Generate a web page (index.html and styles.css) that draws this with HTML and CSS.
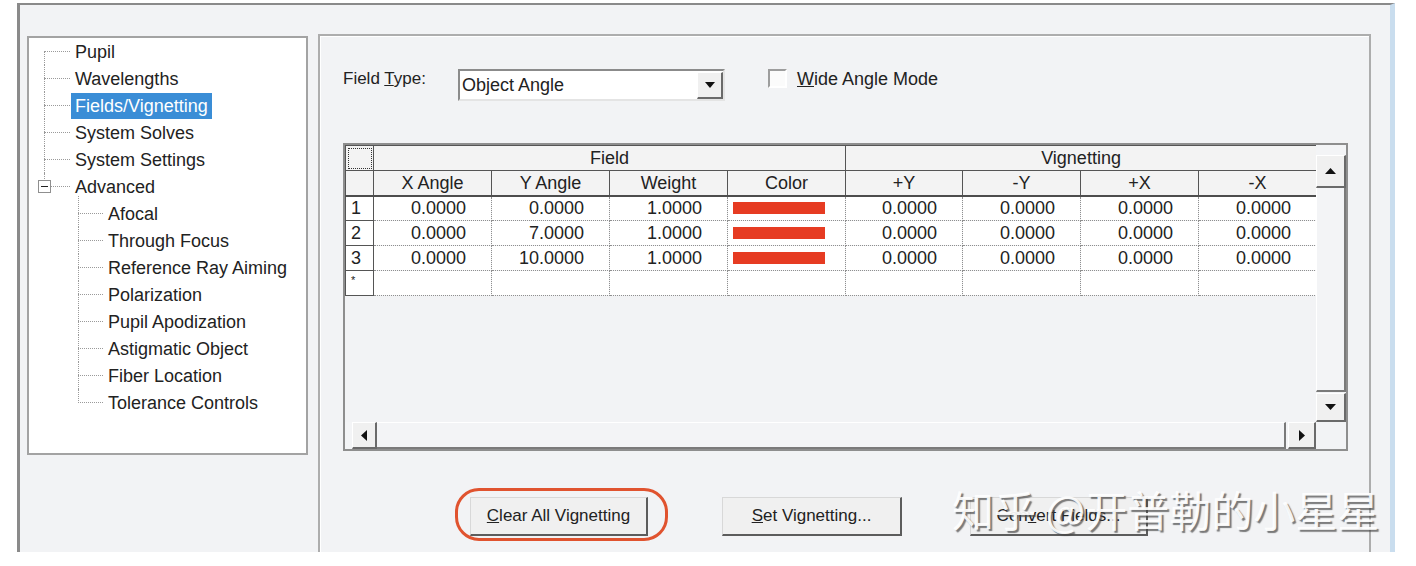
FILE: index.html
```html
<!DOCTYPE html>
<html lang="en">
  <head>
    <meta charset="utf-8">
    <title>System Explorer - Fields/Vignetting</title>
    <link rel="stylesheet" href="styles.css">
  </head>
  <body>

  <div id="dialog">

    <div id="tree">
      <div class="node first"><span class="label">Pupil</span></div>
      <div class="node"><span class="label">Wavelengths</span></div>
      <div class="node"><span class="label selected">Fields/Vignetting</span></div>
      <div class="node"><span class="label">System Solves</span></div>
      <div class="node"><span class="label">System Settings</span></div>
      <div class="node last open"><span class="toggle"></span><span class="label">Advanced</span></div>
      <div class="node child first"><span class="label">Afocal</span></div>
      <div class="node child"><span class="label">Through Focus</span></div>
      <div class="node child"><span class="label">Reference Ray Aiming</span></div>
      <div class="node child"><span class="label">Polarization</span></div>
      <div class="node child"><span class="label">Pupil Apodization</span></div>
      <div class="node child"><span class="label">Astigmatic Object</span></div>
      <div class="node child"><span class="label">Fiber Location</span></div>
      <div class="node child last"><span class="label">Tolerance Controls</span></div>
    </div>

    <div id="panel">

      <div class="fieldtype">
        <span class="caption">Field <u>T</u>ype:</span>
        <div class="combo">
          <span>Object Angle</span>
          <span class="drop btn3d">
            <svg width="10" height="6" viewBox="0 0 10 6"><polygon points="0,0 10,0 5,6" fill="#111"/></svg>
          </span>
        </div>
        <label class="check"><span class="box"></span><span><u>W</u>ide Angle Mode</span></label>
      </div>

      <div class="grid">
        <div class="cells">
          <table class="sheet">
            <colgroup>
              <col class="rowhead">
              <col><col><col><col>
              <col class="narrow"><col><col><col>
            </colgroup>
            <tr class="group">
              <th class="corner"></th>
              <th colspan="4">Field</th>
              <th colspan="4">Vignetting</th>
            </tr>
            <tr class="cols">
              <th class="blank"></th>
              <th>X Angle</th><th>Y Angle</th><th>Weight</th><th>Color</th>
              <th>+Y</th><th>-Y</th><th>+X</th><th>-X</th>
            </tr>
            <tr>
              <th class="num">1</th>
              <td>0.0000</td><td>0.0000</td><td>1.0000</td>
              <td class="swatch"><span></span></td>
              <td>0.0000</td><td>0.0000</td><td>0.0000</td><td>0.0000</td>
            </tr>
            <tr>
              <th class="num">2</th>
              <td>0.0000</td><td>7.0000</td><td>1.0000</td>
              <td class="swatch"><span></span></td>
              <td>0.0000</td><td>0.0000</td><td>0.0000</td><td>0.0000</td>
            </tr>
            <tr>
              <th class="num">3</th>
              <td>0.0000</td><td>10.0000</td><td>1.0000</td>
              <td class="swatch"><span></span></td>
              <td>0.0000</td><td>0.0000</td><td>0.0000</td><td>0.0000</td>
            </tr>
            <tr class="new">
              <th class="num">*</th>
              <td></td><td></td><td></td><td></td>
              <td></td><td></td><td></td><td></td>
            </tr>
          </table>
        </div>

        <div class="vscroll">
          <span class="up btn3d">
            <svg width="11" height="6" viewBox="0 0 11 6"><polygon points="0,6 11,6 5.5,0" fill="#111"/></svg>
          </span>
          <span class="vtrack"></span>
          <span class="down btn3d">
            <svg width="11" height="6" viewBox="0 0 11 6"><polygon points="0,0 11,0 5.5,6" fill="#111"/></svg>
          </span>
        </div>

        <div class="hscroll">
          <span class="left btn3d">
            <svg width="6" height="11" viewBox="0 0 6 11"><polygon points="6,0 6,11 0,5.5" fill="#111"/></svg>
          </span>
          <span class="htrack"></span>
          <span class="right btn3d">
            <svg width="6" height="11" viewBox="0 0 6 11"><polygon points="0,0 0,11 6,5.5" fill="#111"/></svg>
          </span>
        </div>

        <div class="corner-box"></div>
      </div>

      <div class="buttons">
        <div class="marked">
          <button class="push wide"><u>C</u>lear All Vignetting</button>
        </div>
        <button class="push wider set"><u>S</u>et Vignetting...</button>
        <button class="push wide convert">Con<u>v</u>ert Fields...</button>
      </div>

    </div>
  </div>

  <div class="watermark">知乎 @开普勒的小星星</div>

  </body>
</html>
```

FILE: styles.css
```css
html, body {
  margin: 0;
  padding: 0;
}
body {
  position: relative;
  height: 566px;
  overflow: hidden;
  background: #ffffff;
  color: #222222;
  font-family: "Liberation Sans", Arial, sans-serif;
  font-size: 18px;
}

#dialog {
  box-sizing: border-box;
  width: 1378px;
  height: 549px;
  margin: 3px 0 0 17px;
  padding: 29px 0 0 7px;
  background: #f2f3f5;
  border-left: 3px solid #8a8a8a;
  border-top: 2px solid #8a8a8a;
  border-right: 5px solid #c9ddee;
  display: flex;
  align-items: flex-start;
  gap: 10px;
}

/* tree on the left */

#tree {
  box-sizing: border-box;
  width: 281px;
  height: 419px;
  margin-top: 2px;
  background: #ffffff;
  border: 2px solid #a3a3a3;
}

.node {
  position: relative;
  height: 27px;
  padding-left: 42px;
  display: flex;
  align-items: center;
}
.node.child {
  padding-left: 75px;
}

/* dotted connectors */
.node::before {
  content: '';
  position: absolute;
  left: 15px;
  top: 13px;
  width: 26px;
  border-top: 1px dotted #9a9a9a;
}
.node::after {
  content: '';
  position: absolute;
  left: 15px;
  top: 0;
  bottom: 0;
  border-left: 1px dotted #9a9a9a;
}
.node.first::after {
  top: 13px;
}
.node.last::after {
  bottom: 13px;
}
.node.open::before {
  left: 22px;
  width: 19px;
}
.node.child::before {
  left: 49px;
  width: 25px;
}
.node.child::after {
  left: 49px;
}
.node.child.first::after {
  top: -4px;
}

.toggle {
  position: absolute;
  z-index: 1;
  left: 9px;
  top: 7px;
  width: 11px;
  height: 11px;
  border: 1px solid #8f8f8f;
  background: #ffffff;
}
.toggle::after {
  content: '';
  position: absolute;
  left: 2px;
  top: 5px;
  width: 7px;
  height: 1px;
  background: #222;
}

.label {
  padding: 0 4px;
  line-height: 26px;
  white-space: nowrap;
}
.label.selected {
  background: #3a8dd6;
  color: #ffffff;
}

/* right hand panel */

#panel {
  box-sizing: border-box;
  align-self: stretch;
  width: 1053px;
  padding: 33px 0 0 23px;
  border: 2px solid #adadad;
  border-bottom: none;
  box-shadow: inset 1px 1px 0 #ffffff;
}

.fieldtype {
  display: flex;
  align-items: flex-start;
  height: 32px;
}
.caption {
  width: 115px;
  font-size: 17px;
  line-height: 20px;
}

.combo {
  box-sizing: border-box;
  width: 267px;
  height: 32px;
  padding-left: 2px;
  display: flex;
  align-items: center;
  background: #ffffff;
  border: 2px solid;
  border-color: #8b8b8b #e4e4e4 #e4e4e4 #8b8b8b;
}

.btn3d {
  box-sizing: border-box;
  display: flex;
  align-items: center;
  justify-content: center;
  background: #f0f0f0;
  border-style: solid;
  border-width: 1px 2px 2px 1px;
  border-color: #ffffff #6a6a6a #6a6a6a #ffffff;
}

.drop {
  margin-left: auto;
  width: 26px;
  height: 27px;
}

.check {
  margin-left: 43px;
  display: flex;
  align-items: flex-start;
  line-height: 20px;
}
.box {
  box-sizing: border-box;
  width: 19px;
  height: 19px;
  margin-right: 10px;
  background: #fbfbfb;
  border: 2px solid;
  border-color: #9d9d9d #ffffff #ffffff #9d9d9d;
}

/* spreadsheet */

.grid {
  box-sizing: border-box;
  width: 1005px;
  height: 308px;
  margin-top: 42px;
  border: 2px solid #8e8e8e;
  display: grid;
  grid-template-columns: 971px 30px;
  grid-template-rows: 277px 27px;
}

.cells {
  overflow: hidden;
  background: #f2f3f5;
}

.sheet {
  width: 971px;
  table-layout: fixed;
  border-collapse: collapse;
}
.sheet col {
  width: 118px;
}
.sheet col.rowhead {
  width: 28px;
}
.sheet col.narrow {
  width: 117px;
}
.sheet tr {
  height: 25px;
}
.sheet th, .sheet td {
  padding: 0;
  line-height: 22px;
  white-space: nowrap;
  overflow: hidden;
}
.sheet th {
  font-weight: normal;
  background: #f3f3f3;
  border: 1px solid #555555;
}
.sheet tr.cols th {
  border-bottom: 2px solid #4d4d4d;
}
.sheet th.corner {
  outline: 1px dotted #333;
  outline-offset: -3px;
}
.sheet th.num {
  background: #ffffff;
  text-align: left;
  padding-left: 5px;
}
.sheet tr.new th.num {
  font-size: 11px;
  line-height: 12px;
  vertical-align: top;
  padding-top: 3px;
}
.sheet td {
  background: #ffffff;
  border: 1px dotted #8f8f8f;
  text-align: right;
  padding-right: 25px;
}
.sheet td.swatch {
  text-align: left;
  padding: 0 0 0 5px;
}
.swatch span {
  display: block;
  width: 92px;
  height: 12px;
  background: #e63b22;
}

.vscroll {
  box-sizing: border-box;
  padding-top: 10px;
  display: flex;
  flex-direction: column;
  background: #f3f4f6;
}
.up {
  height: 33px;
}
.vtrack {
  flex: 1;
  border-left: 1px solid #ffffff;
  border-right: 2px solid #7a7a7a;
  border-bottom: 2px solid #7a7a7a;
}
.down {
  height: 29px;
  margin-top: 1px;
}

.hscroll {
  padding-left: 7px;
  display: flex;
  background: #f3f4f6;
}
.left {
  width: 25px;
}
.htrack {
  flex: 1;
  border-top: 1px solid #ffffff;
  border-right: 2px solid #7a7a7a;
  border-bottom: 2px solid #7a7a7a;
}
.right {
  width: 28px;
  margin-left: 2px;
}

.corner-box {
  background: #f2f3f5;
}

/* command buttons */

.buttons {
  margin-top: 46px;
  padding-left: 127px;
  display: flex;
}
.push {
  box-sizing: border-box;
  height: 39px;
  padding: 0;
  font-family: "Liberation Sans", Arial, sans-serif;
  font-size: 17px;
  color: #222222;
  background: #f0f0f0;
  border-style: solid;
  border-width: 1px 2px 2px 1px;
  border-color: #d8d8d8 #5c5c5c #5c5c5c #d8d8d8;
}
.push.wide {
  width: 178px;
}
.push.wider {
  width: 180px;
}
.push.set {
  margin-left: 74px;
}
.push.convert {
  margin-left: 68px;
}

.marked {
  position: relative;
  display: flex;
}
.marked::after {
  content: '';
  position: absolute;
  left: -15px;
  right: -20px;
  top: -9px;
  bottom: -5px;
  border: 3px solid #e0532f;
  border-radius: 24px;
}

.watermark {
  position: absolute;
  left: 952px;
  top: 488px;
  font-family: "Noto Sans CJK SC", sans-serif;
  font-size: 42px;
  line-height: 42px;
  white-space: nowrap;
  color: rgba(255, 255, 255, 0.93);
  text-shadow: 2px 2px 1px rgba(70, 70, 70, 0.7);
}
```
